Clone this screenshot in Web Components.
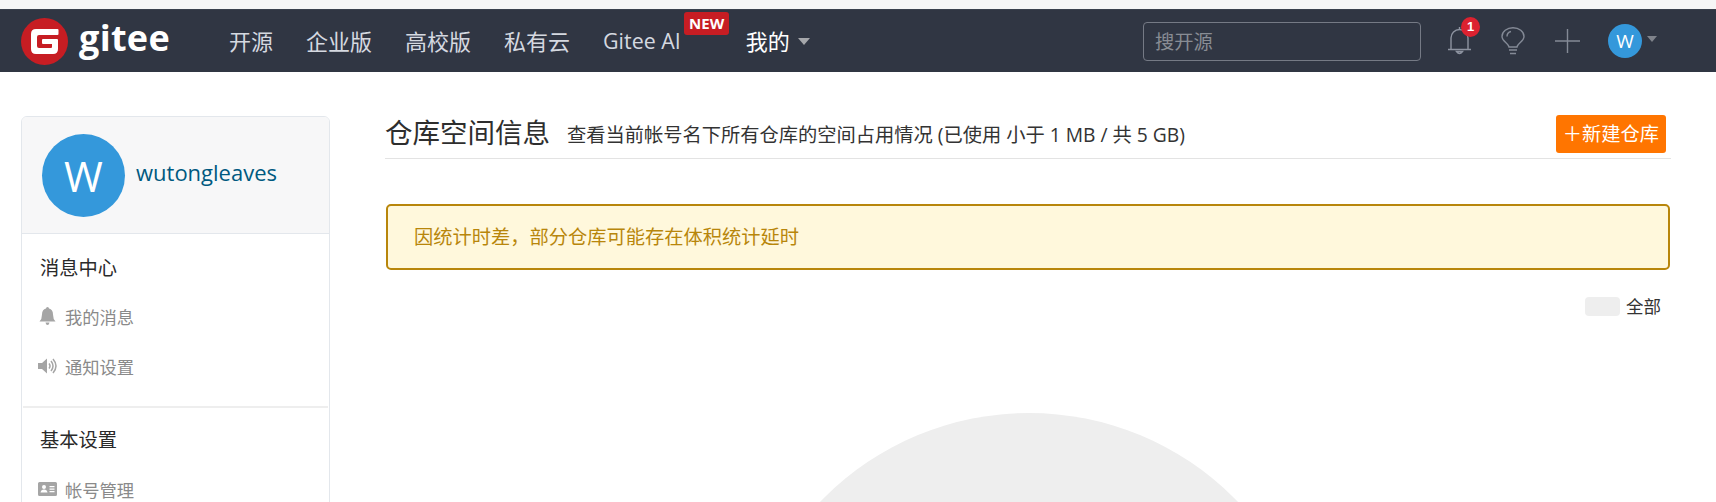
<!DOCTYPE html>
<html lang="zh">
<head>
<meta charset="utf-8">
<title>仓库空间信息</title>
<style>
	html, body { margin: 0; height: 502px; overflow: hidden; background: #fff; }
	body { font-family: "Open Sans", "Noto Sans CJK SC", sans-serif; color: #303643; }
</style>
</head>
<body>
<gitee-nav></gitee-nav>
<main-layout>
	<side-menu slot="side"></side-menu>
	<space-info></space-info>
</main-layout>

<script>
/**
 * Top navigation bar.
 */
class GiteeNav extends HTMLElement {
	constructor() {
		super()
		this.attachShadow({ mode: 'open' })
		this.shadowRoot.innerHTML = `
		<style>
			:host { display: block; padding-top: 9px; background: #f6f6f6; }
			.bar { height: 63px; background: #303643; display: flex; align-items: center; padding: 0 59px 0 21px; border-top: 1px solid #3b414d; box-sizing: border-box; }
			.logo { display: flex; align-items: center; width: 208px; flex: none; }
			.logo svg { flex: none; }
			.brand { color: #fff; font: 700 36px/46px "Open Sans", sans-serif; margin: -7px 0 0 11px; letter-spacing: .3px; }
			.links { display: flex; align-items: center; gap: 33px; font-size: 22px; color: #d5d9e0; flex: none; }
			.links span { position: relative; line-height: 30px; white-space: nowrap; }
			.ai { font-size: 21.400px; }
			.mine { color: #fff; display: flex; align-items: center; margin-left: 32px; }
			.caret { display: inline-block; border: 6px solid transparent; border-top: 7px solid #a5a7ab; border-bottom: 0; margin-left: 8px; }
			.new { position: absolute; left: 81px; top: -14px; background: #c71d23; color: #fff; border-radius: 3px; font: 700 15px/23px "Open Sans", sans-serif; padding: 0 5px; }
			.search { margin-left: auto; width: 265px; height: 37px; border: 1px solid #757a85; border-radius: 4px; color: #888c94; font-size: 19.250px; line-height: 37px; padding-left: 11px; flex: none; }
			.tools { display: flex; align-items: center; margin-left: 27px; }
		</style>
		<div class="bar">
			<div class="logo">
				<svg width="47" height="47" viewBox="0 0 47 47">
					<circle cx="23.5" cy="23.5" r="23.5" fill="#c71d23"/>
					<path d="M10 16q0-5 5-5h21.500q1 0 1 1v4q0 1-1 1H18q-2 0-2 2v9q0 2 2 2h12q1 0 1-1v-3h-9q-1 0-1-1v-3q0-1 1-1h14q1 0 1 1v9q0 5-5 5H15q-5 0-5-5z" fill="#fff"/>
				</svg>
				<span class="brand">gitee</span>
			</div>
			<div class="links">
				<span>开源</span>
				<span>企业版</span>
				<span>高校版</span>
				<span>私有云</span>
				<span class="ai">Gitee AI<b class="new">NEW</b></span>
				<span class="mine">我的<i class="caret"></i></span>
			</div>
			<div class="search" id="search">搜开源</div>
			<div class="tools">
				<nav-tools></nav-tools>
			</div>
		</div>`
	}
}

/**
 * Icons at the right of the bar.
 */
class NavTools extends HTMLElement {
	constructor() {
		super()
		this.attachShadow({ mode: 'open' })
		this.shadowRoot.innerHTML = `
		<style>
			:host { display: flex; align-items: center; }
			.bell { position: relative; width: 23px; height: 28px; }
			.bell svg { display: block; }
			.count { position: absolute; left: 13px; top: -10px; width: 19px; height: 20px; background: #dc2230; color: #fff; border-radius: 50%; font: 700 13px/20px "Liberation Sans", sans-serif; text-align: center; }
			.bulb { margin-left: 30px; }
			.plus { margin-left: 30px; }
			.avatar { margin-left: 28px; width: 34px; height: 34px; border-radius: 50%; background: #3498db; color: #fff; font: 19px/34px "Open Sans", sans-serif; text-align: center; }
			.caret { border: 5px solid transparent; border-top: 6px solid #7f838b; border-bottom: 0; margin: -4px 0 0 5px; }
		</style>
		<div class="bell">
			<svg width="23" height="28" viewBox="0 0 23 28" fill="none" stroke="#8d93a0" stroke-width="1.4">
				<path d="M0 22.500h23M3 22.500V11a8.500 8.500 0 0 1 17 0v11.500M11.500 2.500V0"/>
				<path d="M8.500 24.500q3 4 6 0z"/>
			</svg>
			<span class="count">1</span>
		</div>
		<svg class="bulb" width="24" height="28" viewBox="0 0 24 28" fill="none" stroke="#848a96" stroke-width="1.4">
			<path d="M8 20c0-3.500-7-5.500-7-10.500a11 8.800 0 0 1 22 0c0 5-7 7-7 10.500z"/>
			<path d="M6 9.500q0-4 4-5M8 23h8M9 26.500h6"/>
		</svg>
		<svg class="plus" width="25" height="24" viewBox="0 0 25 24" stroke="#848a96" stroke-width="1.4">
			<path d="M0 12h25M12.500 0v24"/>
		</svg>
		<div class="avatar">W</div>
		<i class="caret"></i>`
	}
}

class MainLayout extends HTMLElement {
	constructor() {
		super()
		this.attachShadow({ mode: 'open' })
		this.shadowRoot.innerHTML = `
		<style>
			:host { display: flex; align-items: flex-start; height: 387px; overflow: hidden; padding: 43px 0 0 21px; }
			::slotted([slot=side]) { flex: none; margin-top: 1px; }
			.content { margin-left: 55px; width: 1286px; flex: none; }
		</style>
		<slot name="side"></slot>
		<div class="content"><slot></slot></div>`
	}
}

/**
 * Left side card.
 */
class SideMenu extends HTMLElement {
	constructor() {
		super()
		this.attachShadow({ mode: 'open' })
		this.shadowRoot.innerHTML = `
		<style>
			:host { display: block; width: 309px; height: 500px; border: 1px solid #e3e7ec; border-radius: 6px; box-sizing: border-box; overflow: hidden; }
			.user { height: 116px; background: #f7f7f8; border-bottom: 1px solid #e3e7ec; display: flex; align-items: center; padding-left: 20px; }
			.big { width: 83px; height: 83px; border-radius: 50%; background: #3498db; color: #fff; font: 42px/83px "Open Sans", sans-serif; text-align: center; }
			.name { color: #005980; font-size: 22px; margin-left: 11px; margin-top: -6px; }
			h4 { margin: 0; padding: 0 0 0 18px; font-size: 19.250px; font-weight: 400; color: #2a2a2a; line-height: 26px; }
			.group { padding: 21px 0 0; }
			.item { display: flex; align-items: center; height: 50px; font-size: 17.300px; color: #8a8a8a; padding-left: 16px; }
			.item svg { width: 19px; margin-right: 8px; flex: none; }
			hr { margin: 15px 1px 0; border: 0; height: 2px; background: #eeeeee; }
			.first { margin-top: 10px; }
		</style>
		<div class="user">
			<div class="big">W</div>
			<div class="name">wutongleaves</div>
		</div>
		<div class="group">
			<h4>消息中心</h4>
			<div class="item first">
				<svg height="18" viewBox="0 0 19 18" fill="#a5a5a5"><path d="M9.500 0q1.500 0 1.500 1.500 4 1 4 6 0 4.500 2.500 7h-16q2.500-2.500 2.500-7 0-5 4-6Q8 0 9.500 0zM7.500 15.500h4q-.5 2.500-2 2.500t-2-2.500z"/></svg>
				我的消息
			</div>
			<div class="item">
				<svg height="18" viewBox="0 0 19 18" fill="#a5a5a5"><path d="M0 6h4l5-4.500v15L4 12H0z"/><path d="M11 6.500q2 2.500 0 5M13 4q4 5 0 10M15 2q6 7 0 14" fill="none" stroke="#a5a5a5" stroke-width="1.500"/></svg>
				通知设置
			</div>
		</div>
		<hr>
		<div class="group" style="padding-top:19px">
			<h4>基本设置</h4>
			<div class="item first" style="margin-top:11px">
				<svg height="16" viewBox="0 0 19 16" fill="#a5a5a5"><path fill-rule="evenodd" d="M1.500 1h16q1.500 0 1.500 1.500v11q0 1.500-1.500 1.500h-16Q0 15 0 13.500v-11Q0 1 1.500 1zM6 4a2 2 0 1 0 0 4 2 2 0 0 0 0-4zM2.500 11.500h7Q9 8.500 6 8.500t-3.500 3zM11.500 5h5v1.200h-5zM11.500 7.500h5v1.200h-5zM11.500 10h5v1.200h-5z"/></svg>
				帐号管理
			</div>
		</div>`
	}
}

/**
 * Right side: heading, notice, legend and the pie chart.
 */
class SpaceInfo extends HTMLElement {
	constructor() {
		super()
		this.attachShadow({ mode: 'open' })
		this.shadowRoot.innerHTML = `
		<style>
			:host { display: block; }
			.head { display: flex; align-items: center; height: 38px; padding-bottom: 5px; border-bottom: 1px solid #e3e3e3; }
			h2 { margin: -3px 0 0; font-size: 27.500px; font-weight: 400; color: #2e2e2e; line-height: 36px; }
			.desc { margin-left: 17px; font-size: 19.250px; color: #333; }
			.btn { margin-left: auto; margin-right: 5px; height: 38px; line-height: 37px; background: #ff7500; color: #fff; border-radius: 3px; font-size: 19.250px; padding: 0 7px; }
			.notice { margin: 45px 1px 0 1px; height: 66px; line-height: 62px; box-sizing: border-box; border: 2px solid #b8860b; border-radius: 5px; background: #fff8dc; color: #b8860b; font-size: 19.250px; padding-left: 26px; }
			.legend { display: flex; justify-content: flex-end; align-items: center; margin: 24px 10px 0 0; font-size: 17.500px; color: #333; line-height: 24px; }
			.swatch { width: 35px; height: 19px; border-radius: 4px; background: #eee; margin-right: 6px; }
			.pie { display: block; margin: 95px 0 0 354px; }
		</style>
		<div class="head">
			<h2>仓库空间信息</h2>
			<span class="desc">查看当前帐号名下所有仓库的空间占用情况 (已使用 小于 1 MB / 共 5 GB)</span>
			<span class="btn">＋新建仓库</span>
		</div>
		<div class="notice">因统计时差，部分仓库可能存在体积统计延时</div>
		<div class="legend"><i class="swatch"></i>全部</div>
		<svg class="pie" width="580" height="580" viewBox="0 0 580 580"><circle cx="290" cy="290" r="290" fill="#eeeeee"/></svg>`
	}
}

customElements.define('nav-tools', NavTools)
customElements.define('gitee-nav', GiteeNav)
customElements.define('side-menu', SideMenu)
customElements.define('space-info', SpaceInfo)
customElements.define('main-layout', MainLayout)
</script>
</body>
</html>
